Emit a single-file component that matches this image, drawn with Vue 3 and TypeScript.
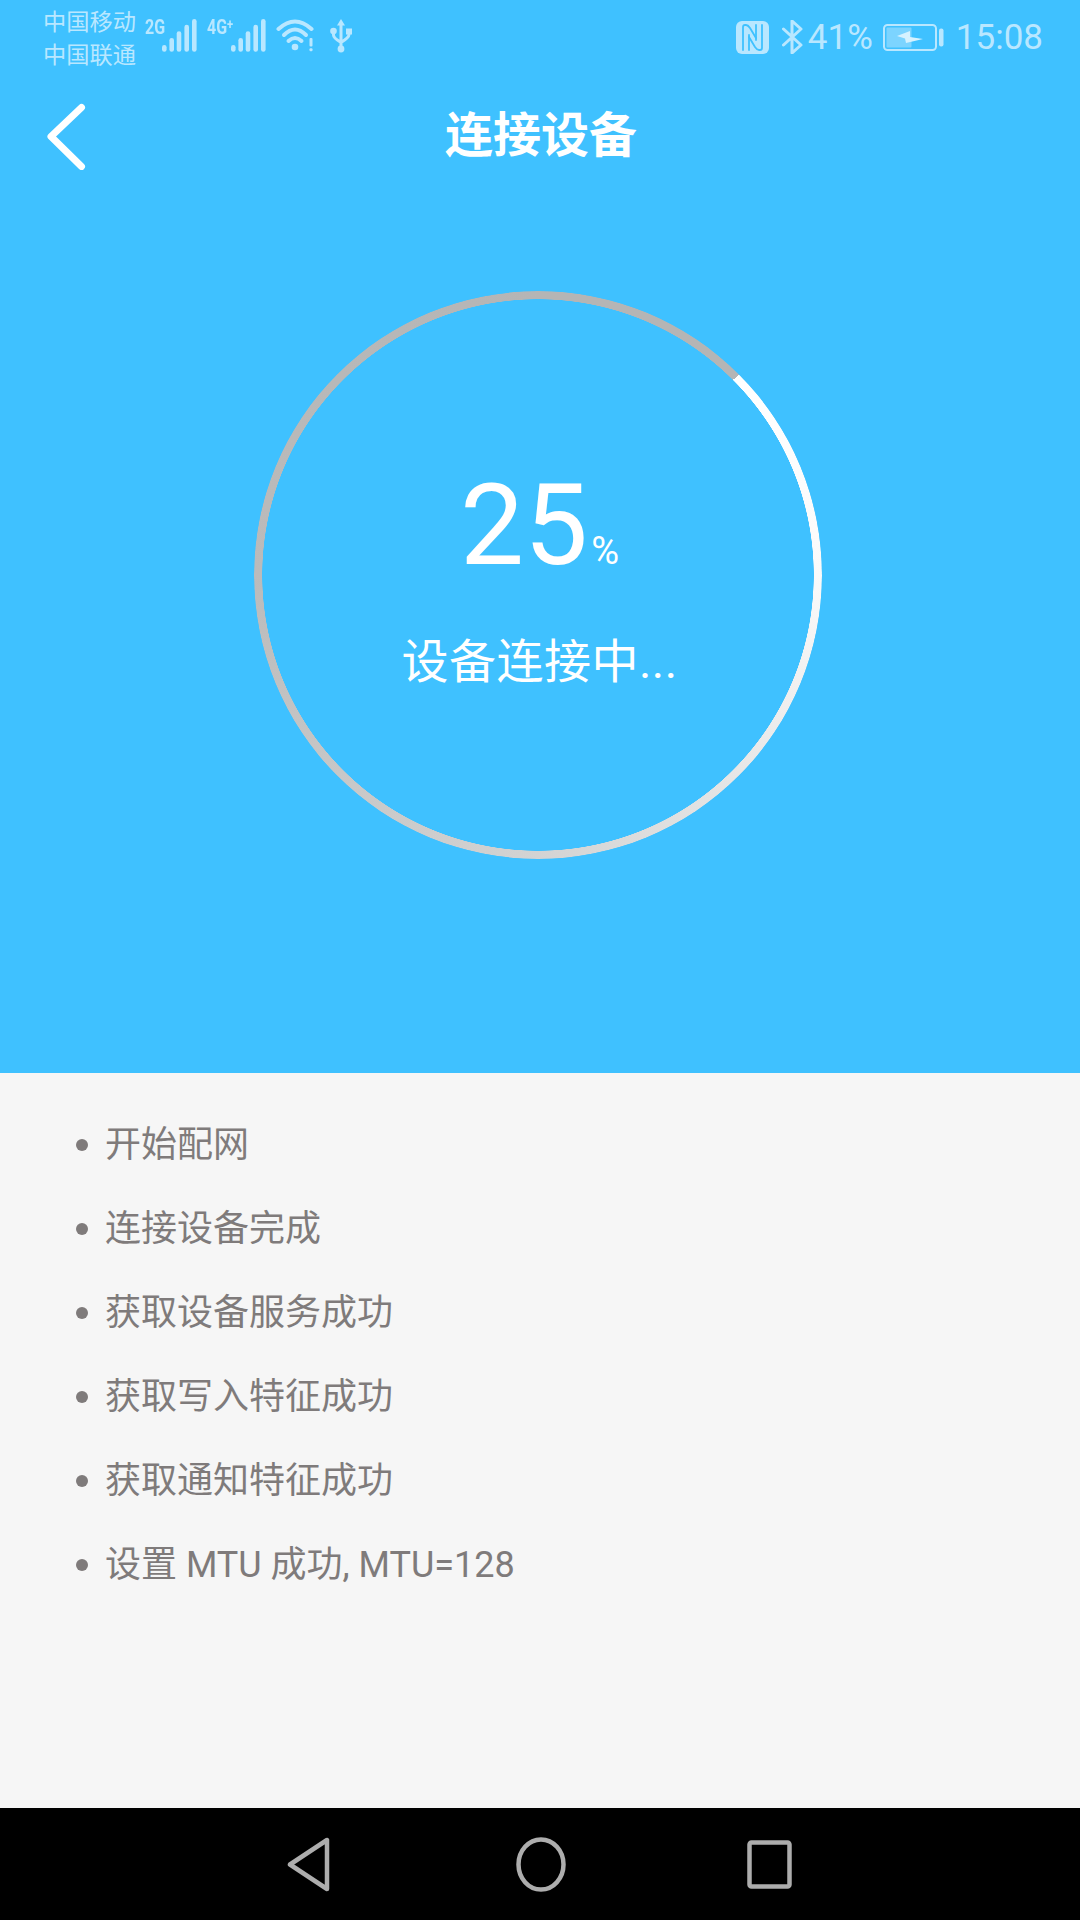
<script setup lang="ts">
import { ref } from 'vue';

const percent = ref<number>(25);

// 配网步骤
const steps = ref<string[]>([
  '开始配网',
  '连接设备完成',
  '获取设备服务成功',
  '获取写入特征成功',
  '获取通知特征成功',
  '设置 MTU 成功, MTU=128',
]);

const signalBars = [
  { x: 2.3, y: 28.3 },
  { x: 9.7, y: 21.3 },
  { x: 17, y: 14.6 },
  { x: 24.7, y: 8 },
  { x: 32.3, y: 2.3 },
];
</script>

<template>
  <div class="page">
    <section class="top">
      <div class="statusBar">
        <div class="statusBar__left">
          <div class="carrier">
            <span>中国移动</span>
            <span>中国联通</span>
          </div>
          <div class="signal signal--first">
            <span class="signal__label">2G</span>
            <svg class="signal__bars" width="35" height="33" viewBox="0 0 35 33">
              <line v-for="b in signalBars" :key="b.x" :x1="b.x" :y1="b.y" :x2="b.x" y2="30.4" />
            </svg>
          </div>
          <div class="signal signal--second">
            <span class="signal__label">4G<sup>+</sup></span>
            <svg class="signal__bars" width="35" height="33" viewBox="0 0 35 33">
              <line v-for="b in signalBars" :key="b.x" :x1="b.x" :y1="b.y" :x2="b.x" y2="30.4" />
            </svg>
          </div>
          <svg class="wifi" width="38" height="33" viewBox="0 0 38 33">
            <path d="M2.5 10 Q19 -5 35.5 10" />
            <path d="M8 16 Q19 5 30 16" />
            <path d="M12.5 22 Q19 16 25.5 22" />
            <circle cx="19" cy="28" r="3.3" class="fill" />
            <rect x="33.5" y="19" width="3" height="8.5" rx="1" class="fill" />
            <rect x="33.5" y="29.2" width="3" height="3" rx="1" class="fill" />
          </svg>
          <svg class="usb" width="24" height="34" viewBox="0 0 24 34">
            <path d="M11 4 V29 M3.5 13 V16 Q3.5 19 11 23.5 M19 13 V15.5 Q19 18.5 11 23.5" />
            <path d="M11 0 L15 6.5 H7 Z" class="fill" />
            <circle cx="11" cy="30" r="3.4" class="fill" />
            <circle cx="3.5" cy="12" r="3.3" class="fill" />
            <rect x="16" y="9.5" width="6" height="6" class="fill" />
          </svg>
        </div>
        <div class="statusBar__right">
          <svg class="nfc" width="33" height="33" viewBox="0 0 33 33">
            <rect class="fill" width="33" height="33" rx="6" />
            <path d="M7 29 V6 Q7 4 9 4 H10 Q12 4 14 7 L20 17" />
            <path d="M13 29 V14" />
            <path d="M26 4 V27 Q26 29 24 29 H23 Q21 29 19 26 L13 16" />
            <path d="M20 4 V19" />
          </svg>
          <svg class="bluetooth" width="21" height="34" viewBox="0 0 21 34">
            <path d="M1.5 9 L19 25 L10 33 V1 L19 9 L1.5 25" />
          </svg>
          <span class="battery__text">41%</span>
          <svg class="battery" width="61" height="29" viewBox="0 0 61 29">
            <rect class="battery__body" x="1" y="2" width="52" height="25" rx="3.5" />
            <rect class="fill battery__level" x="3.5" y="4.5" width="25" height="20" rx="1" />
            <path class="battery__bolt" d="M14 13 L27 8 L27 14 L40 16 L23 20 L22 15.5 Z" />
            <rect class="fill" x="56" y="5.5" width="4.5" height="18" rx="2" />
          </svg>
          <span class="clock">15:08</span>
        </div>
      </div>

      <header class="navBar">
        <svg class="navBar__back" width="40" height="68" viewBox="0 0 40 68">
          <path d="M35.5 5.5 L5 34.5 L35.5 64.5" />
        </svg>
        <h1 class="navBar__ttl">连接设备</h1>
      </header>

      <div class="ring">
        <p class="ring__num">{{ percent }}<span class="ring__unit">%</span></p>
        <p class="ring__text">设备连接中...</p>
      </div>
    </section>

    <ul class="stepList">
      <li v-for="step in steps" :key="step" class="stepList__item">{{ step }}</li>
    </ul>

    <nav class="softKeys">
      <svg width="44" height="55" viewBox="0 0 44 55">
        <path d="M40 3 V52 L3 27.5 Z" />
      </svg>
      <svg class="softKeys__home" width="50" height="55" viewBox="0 0 50 55">
        <ellipse cx="25" cy="27.5" rx="22.5" ry="25" />
      </svg>
      <svg width="45" height="49" viewBox="0 0 45 49">
        <rect x="2.5" y="2.5" width="40" height="44" rx="2" />
      </svg>
    </nav>
  </div>
</template>

<style>
html,
body {
  margin: 0;
  background: #000;
}
</style>

<style scoped>
.page {
  width: 1080px;
  height: 1920px;
  display: flex;
  flex-direction: column;
  font-family: Roboto, "Noto Sans CJK SC", sans-serif;
  background: #f6f6f6;
  overflow: hidden;
}

.top {
  height: 1073px;
  flex-shrink: 0;
  background: #3fc1ff;
  display: flex;
  flex-direction: column;
  align-items: center;
}

/* ステータスバー */
.statusBar {
  width: 100%;
  height: 64px;
  box-sizing: border-box;
  padding: 8px 37px 0 43px;
  display: flex;
  justify-content: space-between;
  color: #b9e7ff;
}

.statusBar svg path,
.statusBar svg line {
  fill: none;
  stroke: #b9e7ff;
  stroke-linecap: round;
  stroke-linejoin: round;
}

.statusBar svg .fill {
  fill: #b9e7ff;
  stroke: none;
}

.statusBar__left {
  display: flex;
  align-items: flex-start;
}

.statusBar__right {
  display: flex;
  align-items: center;
  height: 48px;
  margin-top: 5px;
}

.carrier {
  display: flex;
  flex-direction: column;
  flex-shrink: 0;
  font-size: 23.25px;
  line-height: 33px;
  width: 102px;
  margin-top: -2px;
}

.signal {
  display: flex;
  position: relative;
  height: 33px;
  margin-top: 11px;
}

.signal--first {
  width: 52px;
}

.signal--second {
  width: 59px;
  margin-left: 10px;
}

.signal__label {
  font-size: 20px;
  font-weight: 700;
  line-height: 16px;
  transform: scaleX(0.8);
  transform-origin: left top;
  white-space: nowrap;
}

.signal__label sup {
  font-size: 14px;
  line-height: 0;
  vertical-align: 5px;
}

.signal__bars {
  position: absolute;
  right: 0;
  top: 0;
}

.signal__bars line {
  stroke-width: 4.6px;
}

.wifi {
  margin-top: 11px;
  margin-left: 10px;
}

.wifi path {
  stroke-width: 4px;
}

.usb {
  margin-top: 11px;
  margin-left: 16px;
}

.usb path {
  stroke-width: 3px;
}

.statusBar svg.nfc path {
  stroke: #3fc1ff;
  stroke-width: 1.8px;
}

.bluetooth {
  margin-left: 13px;
}

.bluetooth path {
  stroke-width: 3px;
}

.battery__text {
  font-size: 35px;
  margin-left: 5px;
}

.battery {
  margin-left: 10px;
}

.battery__body {
  fill: none;
  stroke: #b9e7ff;
  stroke-width: 2px;
}

.statusBar svg .battery__level {
  fill: #7cd4ff;
}

.statusBar svg .battery__bolt {
  fill: #d6f2ff;
  stroke: none;
}

.clock {
  font-size: 35px;
  margin-left: 12px;
}

/* ヘッダー */
.navBar {
  width: 100%;
  height: 144px;
  position: relative;
  display: flex;
  align-items: center;
  justify-content: center;
}

.navBar__back {
  position: absolute;
  left: 46px;
  top: 38px;
}

.navBar__back path {
  fill: none;
  stroke: #fff;
  stroke-width: 7px;
  stroke-linecap: round;
  stroke-linejoin: round;
}

.navBar__ttl {
  margin: 0 0 0 2px;
  color: #fff;
  font-size: 48px;
  font-weight: 700;
  line-height: 60px;
}

/* 円形プログレス */
.ring {
  width: 568px;
  height: 568px;
  box-sizing: border-box;
  padding-left: 4px;
  margin: 83px 0 0 -5px;
  position: relative;
  display: flex;
  flex-direction: column;
  align-items: center;
  color: #fff;
}

.ring::before {
  content: '';
  position: absolute;
  inset: 0;
  border-radius: 50%;
  background: conic-gradient(from 45deg, #fff 0deg, #fafafa 45deg, #d3d3d3 135deg, #bbb 225deg, #b5b5b5 315deg, #b5b5b5 360deg);
  -webkit-mask: radial-gradient(closest-side, transparent calc(100% - 8.5px), #000 calc(100% - 8px));
  mask: radial-gradient(closest-side, transparent calc(100% - 8.5px), #000 calc(100% - 8px));
}

.ring__num {
  margin: 168px 0 0;
  font-size: 114px;
  line-height: 132px;
  font-weight: 400;
}

.ring__unit {
  font-size: 38px;
  margin-left: 3px;
}

.ring__text {
  margin: 13px 0 0;
  font-size: 47px;
  line-height: 64px;
  letter-spacing: 0.5px;
}

/* 手順リスト */
.stepList {
  flex: 1;
  list-style: none;
  margin: 0;
  padding: 30px 0 0 105px;
  color: #7f7b7b;
  font-size: 36px;
  line-height: 84px;
}

.stepList__item {
  position: relative;
}

.stepList__item::before {
  content: '';
  position: absolute;
  left: -29px;
  top: 36px;
  width: 12px;
  height: 12px;
  border-radius: 50%;
  background: #7f7b7b;
}

/* ナビゲーションキー */
.softKeys {
  height: 112px;
  flex-shrink: 0;
  background: #000;
  display: flex;
  align-items: center;
  justify-content: space-between;
  box-sizing: border-box;
  padding: 0 288px 0 287px;
}

.softKeys svg {
  fill: none;
  stroke: #adadad;
  stroke-width: 4.5px;
  stroke-linejoin: round;
}

.softKeys__home {
  margin-left: 3px;
}
</style>
